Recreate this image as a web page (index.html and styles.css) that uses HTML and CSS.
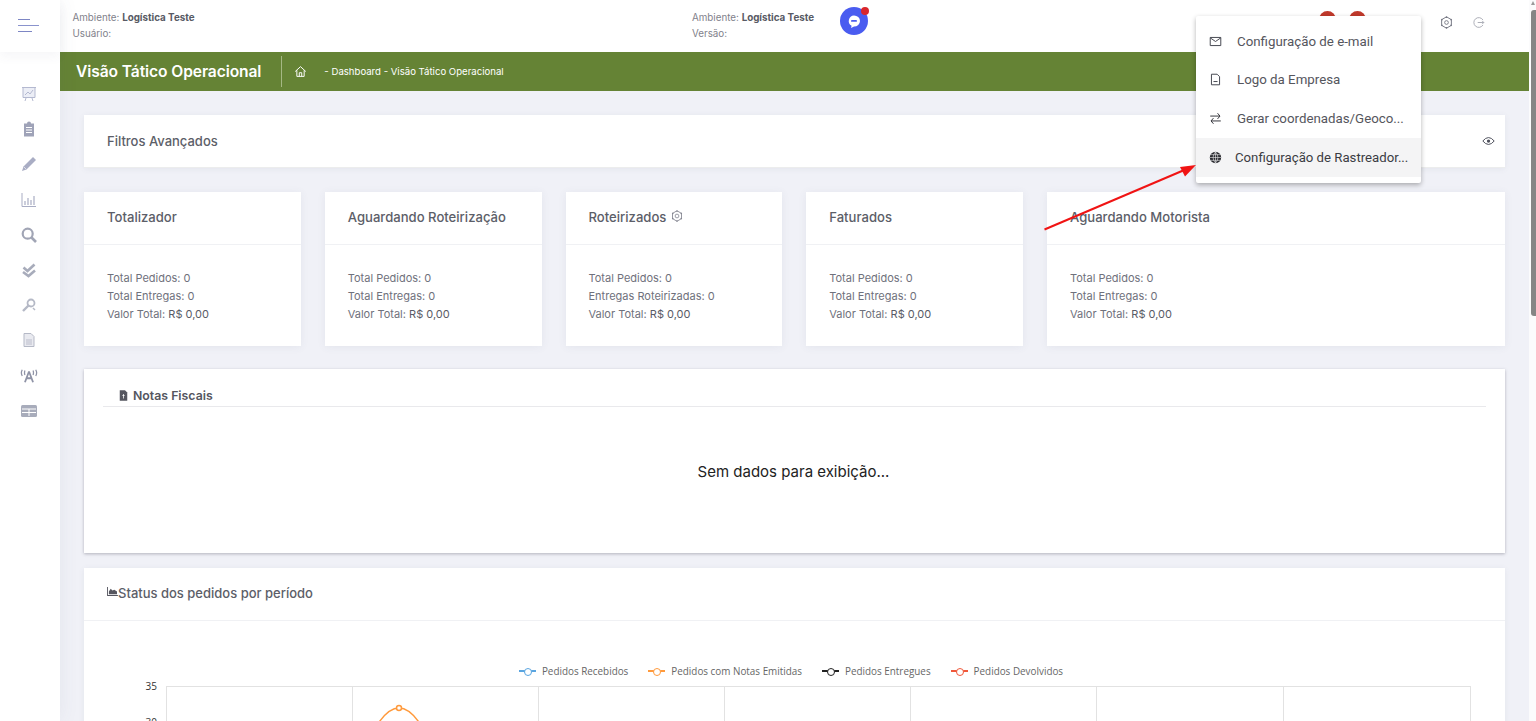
FILE: index.html
```html
<!DOCTYPE html>
<html lang="pt-BR">
<head>
<meta charset="utf-8">
<title>Visão Tático Operacional</title>
<link rel="stylesheet" href="styles.css">
</head>
<body>
<div class="app">
  <aside class="sidebar">
    <div class="burger"><i class="b1"></i><i class="b2"></i><i class="b3"></i></div>
    <nav class="side-icons">
      <svg viewBox="0 0 16 16"><rect x="2" y="1.500" width="12" height="10" fill="#eceef6"/><path d="M1 1.500h14M2 1.500v10h12v-10M4 15l1-3M12 15l-1-3" fill="none" stroke="#b4b9d0" stroke-width="1"/><path d="M4 9l3-3 2 2 3-4" fill="none" stroke="#b4b9d0"/></svg>
      <svg viewBox="0 0 16 16"><path d="M3 2.500h3a2 2 0 0 1 4 0h3v13H3z" fill="#9fa3b8"/><path d="M5 6.500h6M5 9h6M5 11.500h6" stroke="#fff" stroke-width="1"/></svg>
      <svg viewBox="0 0 16 16"><path d="M12 1l3 3-9.500 9.500-4.500 1.500 1.500-4.500z" fill="#a9adc4"/><path d="M3 11l2 2" stroke="#fff" stroke-width=".6"/></svg>
      <svg viewBox="0 0 16 16"><path d="M1 1v13.500h14" fill="none" stroke="#a9adc4"/><path d="M4 9v4M7 6v7M10 8v5M13 4v9" stroke="#a9adc4" stroke-width="1.200"/></svg>
      <svg viewBox="0 0 16 16"><circle cx="6.700" cy="6.700" r="5" fill="none" stroke="#a1a5b5" stroke-width="2.200"/><path d="M10.500 10.500L15 15" stroke="#a1a5b5" stroke-width="2.600"/></svg>
      <svg viewBox="0 0 16 16"><path d="M2.500 5.500l4 3.500 7-6.500M2 10l5.500 4 6.500-5.500" fill="none" stroke="#a8acbb" stroke-width="2.600"/></svg>
      <svg viewBox="0 0 16 16"><circle cx="10" cy="6" r="3.500" fill="none" stroke="#b5b9c6" stroke-width="1.800"/><path d="M7.500 8.500L2 14" stroke="#b5b9c6" stroke-width="2.400"/><path d="M12 11l2 2" stroke="#b5b9c6" stroke-width="1.500"/></svg>
      <svg viewBox="0 0 16 16"><path d="M3 1.500h7l3 3v10H3z" fill="#e9eaf0" stroke="#b5b9c6"/><path d="M5 8h6M5 10h6M5 12h6" stroke="#b5b9c6" stroke-width=".9"/></svg>
      <svg class="wide" viewBox="0 0 20 16"><path d="M10 3l-4.500 12M10 3l4.500 12M7 10.500h6" stroke="#8f93a6" stroke-width="2" fill="none"/><path d="M2.500 1q-2 3.500 0 7M17.500 1q2 3.500 0 7M5.500 2q-1 2.500 0 5M14.500 2q1 2.500 0 5" stroke="#8f93a6" stroke-width="1.400" fill="none"/></svg>
      <svg class="wide" viewBox="0 0 18 14"><rect x="1" y="1" width="16" height="12" rx="1.500" fill="#a8acbb"/><path d="M2 5h14M9 5v7M2 8.500h14" stroke="#fff" stroke-width="1"/></svg>
    </nav>
  </aside>
  <div class="main">
    <header class="topbar">
      <div class="env env-left">
        <div>Ambiente: <b>Logística Teste</b></div>
        <div>Usuário:</div>
      </div>
      <div class="env env-mid">
        <div>Ambiente: <b>Logística Teste</b></div>
        <div>Versão:</div>
      </div>
      <div class="chat">
        <svg viewBox="0 0 28 28"><circle cx="14" cy="14" r="14" fill="#4a5cf0"/><path d="M14 8.500a6 5.500 0 0 1 0 11l-3 1.500.6-2.200A5.500 5.500 0 0 1 14 8.500z" fill="#fff"/><rect x="11" y="13" width="6" height="1.800" rx=".9" fill="#4a5cf0"/></svg>
        <span class="chat-dot"></span>
      </div>
      <div class="top-right">
        <span class="red-dot"></span>
        <span class="red-dot second"></span>
        <svg class="tool" viewBox="0 0 16 16"><path d="M8 1l6 3.500v7L8 15l-6-3.500v-7z" fill="none" stroke="#777985" stroke-width="1.200"/><path d="M8 .5v2M8 13.500v2M1.500 4l1.700 1M12.800 11l1.700 1M14.500 4l-1.700 1M3.200 11l-1.700 1" stroke="#777985" stroke-width="1.600"/><circle cx="8" cy="8" r="2.300" fill="none" stroke="#777985" stroke-width="1.100"/></svg>
        <svg class="tool logout" viewBox="0 0 16 16"><path d="M13.500 5A6 6 0 1 0 13.500 11" fill="none" stroke="#a3a5af" stroke-width="1.100"/><path d="M7 8h7.500M12.500 6l2 2-2 2" fill="none" stroke="#a3a5af" stroke-width="1.100"/></svg>
      </div>
    </header>
    <div class="greenbar">
      <h1>Visão Tático Operacional</h1>
      <span class="divider"></span>
      <svg class="home" viewBox="0 0 16 16"><path d="M1.500 8L8 2l6.500 6M3.500 6.500V14h9V6.500M6.500 14V9.500h3V14" fill="none" stroke="#fff" stroke-width="1.200"/></svg>
      <span class="crumb">- Dashboard - Visão Tático Operacional</span>
    </div>
    <div class="content">
      <section class="panel filters">
        <span>Filtros Avançados</span>
        <svg class="eye" viewBox="0 0 16 12"><path d="M1 6q7-8.500 14 0q-7 8.500-14 0z" fill="none" stroke="#4c4e5a" stroke-width="1.200"/><circle cx="8" cy="6" r="2" fill="#4c4e5a"/></svg>
      </section>
      <div class="cards">
        <article class="card"><h2>Totalizador</h2><div class="card-body"><p>Total Pedidos: 0</p><p>Total Entregas: 0</p><p>Valor Total: <em>R$ 0,00</em></p></div></article>
        <article class="card"><h2>Aguardando Roteirização</h2><div class="card-body"><p>Total Pedidos: 0</p><p>Total Entregas: 0</p><p>Valor Total: <em>R$ 0,00</em></p></div></article>
        <article class="card"><h2>Roteirizados <svg class="gear" viewBox="0 0 16 16"><path d="M8 1l6 3.500v7L8 15l-6-3.500v-7z" fill="none" stroke="#7e808c" stroke-width="1.100"/><path d="M8 .5v2M8 13.500v2M1.500 4l1.700 1M12.800 11l1.700 1M14.500 4l-1.700 1M3.200 11l-1.700 1" stroke="#7e808c" stroke-width="1.500"/><circle cx="8" cy="8" r="2.500" fill="none" stroke="#7e808c"/></svg></h2><div class="card-body"><p>Total Pedidos: 0</p><p>Entregas Roteirizadas: 0</p><p>Valor Total: <em>R$ 0,00</em></p></div></article>
        <article class="card"><h2>Faturados</h2><div class="card-body"><p>Total Pedidos: 0</p><p>Total Entregas: 0</p><p>Valor Total: <em>R$ 0,00</em></p></div></article>
        <article class="card"><h2>Aguardando Motorista</h2><div class="card-body"><p>Total Pedidos: 0</p><p>Total Entregas: 0</p><p>Valor Total: <em>R$ 0,00</em></p></div></article>
      </div>
      <section class="panel notas">
        <div class="notas-title"><svg viewBox="0 0 12 14"><path d="M1 0h7l3 3v11H1z" fill="#55565f"/><path d="M6 5v6M4.500 7h3" stroke="#fff"/></svg>Notas Fiscais</div>
        <div class="notas-empty">Sem dados para exibição...</div>
      </section>
      <section class="panel status">
        <div class="status-title"><svg viewBox="0 0 12 10"><path d="M0 0v10h12V9H1V0z" fill="#55565f"/><path d="M2 8V5l2-3 2 2 2-1 3 2v3z" fill="#55565f"/></svg>Status dos pedidos por período</div>
        <div class="chart">
          <div class="legend">
            <span class="lg"><i class="mark blue"></i>Pedidos Recebidos</span>
            <span class="lg"><i class="mark orange"></i>Pedidos com Notas Emitidas</span>
            <span class="lg"><i class="mark black"></i>Pedidos Entregues</span>
            <span class="lg"><i class="mark red"></i>Pedidos Devolvidos</span>
          </div>
          <div class="plot-row">
            <div class="y-axis"><span>35</span><span>30</span></div>
            <svg class="plot" viewBox="0 0 1305 60">
              <path d="M.5 .5H1304.500M.5 0V60M186.500 0V60M372.500 0V60M558.500 0V60M744.500 0V60M930.500 0V60M1117.500 0V60M1304.500 0V60" fill="none" stroke="#e2e2e2"/>
              <path d="M205 50C212 36 222 22 233 22S254 36 261 50" fill="none" stroke="#ff9a3c" stroke-width="1.500"/>
              <circle cx="233" cy="22" r="2.500" fill="#fff" stroke="#ff9a3c" stroke-width="1.500"/>
            </svg>
          </div>
        </div>
      </section>
    </div>
  </div>
  <div class="scrollbar"><span class="arrow-up"></span><span class="thumb"></span></div>
</div>
<div class="menu">
  <div class="menu-item"><svg viewBox="0 0 16 14"><path d="M1.500 2h13v10h-13zM1.500 2.500L8 7l6.500-4.500" fill="none" stroke="#44464f" stroke-width="1.200"/></svg><span>Configuração de e-mail</span></div>
  <div class="menu-item"><svg viewBox="0 0 16 16"><path d="M3 1.500h7l3 3v10H3z" fill="none" stroke="#44464f" stroke-width="1.200"/><path d="M5.500 10.500h5" stroke="#44464f" stroke-width="1.200"/></svg><span>Logo da Empresa</span></div>
  <div class="menu-item"><svg viewBox="0 0 16 16"><path d="M1.500 5h12M10.500 1.500l3 3.500-3 3.500M14.500 11h-12M5.500 7.500l-3 3.500 3 3.500" fill="none" stroke="#33343b" stroke-width="1.200"/></svg><span>Gerar coordenadas/Geoco...</span></div>
  <div class="menu-item active"><svg viewBox="0 0 16 16"><circle cx="8" cy="8" r="7" fill="#2a2b31"/><path d="M1 8h14M8 1v14M2 4.500h12M2 11.500h12M8 1q-6 7 0 14M8 1q6 7 0 14" fill="none" stroke="#f4f4f5" stroke-width=".7"/></svg><span>Configuração de Rastreador...</span></div>
</div>
<svg class="arrow" viewBox="0 0 160 70"><path d="M1.500 66.500L146 5" stroke="#f01414" stroke-width="2"/><path d="M153 2L137 4l5 9.500z" fill="#f01414"/></svg>
</body>
</html>
```

FILE: styles.css
```css
* { box-sizing: border-box; }
html, body { margin: 0; height: 721px; overflow: hidden; }
body { font-family: Inter, "Liberation Sans", sans-serif; background: #f0f1f7; color: #5c5e68; position: relative; }
.app { display: flex; width: 1536px; height: 721px; }
.sidebar { width: 60px; flex: none; background: #fff; box-shadow: 0 0 20px rgba(80,85,120,.08); z-index: 2; }
.burger { height: 52px; position: relative; box-shadow: 0 5px 10px rgba(80,85,120,.05); }
.burger i { position: absolute; left: 18px; height: 1px; background: #7d86c4; display: block; }
.b1 { top: 19px; width: 12px; }
.b2 { top: 25px; width: 21px; }
.b3 { top: 31px; width: 14px; }
.burger .b2 { background: #8a93cd; }
.side-icons { display: flex; flex-direction: column; align-items: center; padding: 34px 3px 0 0; gap: 19.200px; }
.side-icons svg { width: 16px; height: 16px; display: block; }
.side-icons svg.wide { width: 18px; }
.main { width: 1469px; flex: none; display: flex; flex-direction: column; overflow: hidden; }
.topbar { height: 52px; flex: none; background: #fff; display: flex; position: relative; align-items: flex-start; padding: 10px 0 0 12.500px; font-size: 9.800px; line-height: 16px; color: #7f818b; }
.topbar b { color: #585a64; font-weight: 700; }
.env-left { width: 619.500px; }
.env-mid { width: 148px; }
.chat { width: 28px; height: 28px; margin-top: -3px; position: relative; }
.chat svg { display: block; width: 28px; height: 28px; }
.chat-dot { position: absolute; top: 0; right: -1px; width: 8px; height: 8px; border-radius: 50%; background: #d9262c; }
.top-right { margin-left: auto; display: flex; align-items: flex-start; padding-right: 44px; margin-top: -10px; }
.red-dot { width: 17px; height: 17px; margin-top: 11px; border-radius: 50%; background: #c0392b; margin-right: 13px; }
.red-dot.second { margin-right: 73.500px; }
.tool { width: 13px; height: 13px; margin-top: 16px; }
.logout { margin-left: 19.500px; }
.greenbar { height: 39px; background: #658335; color: #fff; display: flex; align-items: center; padding-left: 16px; flex: none; }
.greenbar h1 { margin: 0; font-size: 15.600px; font-weight: 600; line-height: 38px; letter-spacing: -.1px; }
.divider { width: 1px; height: 31px; background: #a5b884; margin-left: 20px; margin-right: 12px; }
.home { width: 13px; height: 13px; margin-right: 17px; }
.crumb { font-size: 9.600px; }
.content { padding: 24px 24px 0; display: flex; flex-direction: column; }
.panel { background: #fff; box-shadow: 0 1px 6px rgba(80,85,120,.08); flex: none; }
.filters { height: 53px; padding: 0 10.500px 0 23px; display: flex; align-items: center; justify-content: space-between; font-size: 13px; font-weight: 500; border-bottom: 1px solid #eceded; }
.eye { width: 13px; height: 10px; }
.cards { display: grid; grid-template-columns: repeat(4, 216.750px) 1fr; gap: 24px; margin-top: 24px; flex: none; }
.card { height: 154px; background: #fff; box-shadow: 0 1px 8px rgba(80,85,120,.08); }
.card h2 { margin: 0; height: 53px; padding: 0 23px 2px; display: flex; align-items: center; gap: 5px; font-size: 13.100px; font-weight: 500; color: #5c5e68; border-bottom: 1px solid #f0f1f4; }
.gear { width: 12px; height: 12px; margin-top: -2px; }
.card-body { padding: 24px 23px 0; font-size: 11px; line-height: 18px; color: #6f717c; }
.card-body p { margin: 0; }
.card-body em { font-style: normal; color: #595b66; }
.notas { height: 184px; margin-top: 23px; padding: 15px 19px 0; box-shadow: 0 1px 3px rgba(60,60,80,.35); }
.notas-title { height: 23px; border-bottom: 1px solid #e9e9ec; display: flex; align-items: center; gap: 5px; padding-left: 16px; font-size: 12.300px; font-weight: 600; color: #55565f; }
.notas-title svg { width: 9px; height: 11px; }
.notas-empty { text-align: center; font-size: 15px; color: #222; margin-top: 54px; line-height: 22px; padding-right: 2px; }
.status { margin-top: 15px; height: 200px; }
.status-title { height: 53px; padding: 0 23px 2px; display: flex; align-items: center; font-size: 13px; font-weight: 500; border-bottom: 1px solid #f0f1f4; }
.status-title svg { width: 11px; height: 9px; margin-top: -4px; }
.chart { position: relative; }
.legend { display: flex; justify-content: center; gap: 20px; margin-top: 42px; height: 23px; font-family: "Open Sans", "Liberation Sans", sans-serif; font-size: 9.900px; color: #666; line-height: 16px; padding-right: 7px; }
.lg { display: flex; align-items: center; height: 16px; }
.mark { width: 17px; height: 2px; position: relative; margin-right: 6px; display: block; }
.mark::after { content: ""; position: absolute; left: 5px; top: -2px; width: 6px; height: 6px; border-radius: 50%; background: #fff; border: 1.500px solid; border-color: inherit; }
.blue { background: #5aa5e0; border-color: #5aa5e0; }
.orange { background: #ff9a3c; border-color: #ff9a3c; }
.black { background: #222; border-color: #222; }
.red { background: #f0583a; border-color: #f0583a; }
.plot-row { display: flex; padding-left: 49px; }
.y-axis { width: 33px; display: flex; flex-direction: column; gap: 26px; align-items: flex-end; padding-right: 9px; font-family: "Open Sans", "Liberation Sans", sans-serif; font-size: 10px; line-height: 10px; color: #333; margin-top: -5px; }
.plot { width: 1305px; height: 60px; flex: none; display: block; }
.scrollbar { width: 7px; flex: none; background: #fbfbfc; position: relative; }
.arrow-up { position: absolute; left: 2px; top: 1px; border: 2.500px solid transparent; border-top: 0; border-bottom: 4px solid #9a9a9a; }
.thumb { position: absolute; left: 2px; top: 10px; width: 5px; height: 306px; background: #858585; border-radius: 3px 0 0 3px; }
.menu { position: absolute; left: 1196px; top: 16px; width: 225px; height: 167px; background: #fff; border-radius: 2px; box-shadow: 0 2px 5px rgba(0,0,0,.3); padding-top: 6px; font-family: Roboto, "Liberation Sans", sans-serif; font-size: 13.300px; color: #55565d; z-index: 5; }
.menu-item { height: 38.600px; display: flex; align-items: center; padding-left: 13px; gap: 15px; white-space: nowrap; }
.menu-item svg { width: 13px; height: 13px; flex: none; }
.menu-item.active { background: #f4f4f5; gap: 13px; color: #3b3c43; height: 39px; font-size: 13.200px; }
.arrow { position: absolute; left: 1043px; top: 163px; width: 160px; height: 70px; z-index: 6; }
```
